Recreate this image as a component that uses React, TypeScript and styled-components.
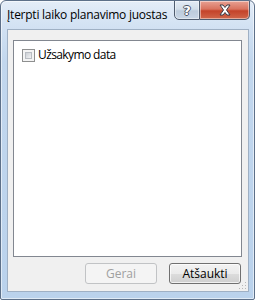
import React from "react";
import styled, { createGlobalStyle } from "styled-components";

const Global = createGlobalStyle`
  html, body { margin: 0; padding: 0; background: #ffffff; }
  body { font-family: "Open Sans", "Noto Sans", "Liberation Sans", sans-serif; }
  * { box-sizing: border-box; }
`;

const Window = styled.div`
  width: 255px;
  height: 300px;
  display: flex;
  flex-direction: column;
  border: 1px solid #5d7089;
  border-radius: 6px 6px 2px 2px;
  background: linear-gradient(180deg, #e4edf8 0px, #d3e2f3 24px, #c2d7ee 60px, #bad2ec 100%);
  box-shadow: inset 0 0 0 1px rgba(255, 255, 255, 0.55);
  overflow: hidden;
`;

const TitleBar = styled.div`
  height: 28px;
  display: flex;
  align-items: flex-start;
  padding-left: 6px;
  flex-shrink: 0;
`;

const Title = styled.div`
  margin-top: 6px;
  font-size: 12px;
  line-height: 16px;
  color: #000000;
  letter-spacing: -0.25px;
  white-space: nowrap;
`;

const Caption = styled.div`
  margin-left: auto;
  margin-right: 4px;
  display: flex;
  margin-top: -1px;
`;

const CaptionButton = styled.div<{ $variant: "help" | "close" }>`
  width: ${(p) => (p.$variant === "help" ? "26px" : "50px")};
  height: 20px;
  display: flex;
  align-items: center;
  justify-content: center;
  border: 1px solid #4f5c6f;
  border-left-width: ${(p) => (p.$variant === "close" ? "0" : "1px")};
  border-radius: ${(p) => (p.$variant === "help" ? "0 0 0 5px" : "0 0 5px 0")};
  background: ${(p) =>
    p.$variant === "help"
      ? "linear-gradient(180deg, #e3ebf5 0%, #d3deea 45%, #bccbdc 55%, #c8d6e6 100%)"
      : "linear-gradient(180deg, #e8a193 0%, #d9735f 45%, #c4432a 55%, #d0664a 100%)"};
  box-shadow: inset 0 0 0 1px rgba(255, 255, 255, 0.45);
`;

const HelpGlyph = styled.span`
  font-family: "DejaVu Sans", sans-serif;
  font-weight: bold;
  font-size: 13px;
  line-height: 13px;
  color: #ffffff;
  text-shadow: 1px 0 0 #4c5566, -1px 0 0 #4c5566, 0 1px 0 #4c5566, 0 -1px 0 #4c5566;
`;

const Client = styled.div`
  position: relative;
  flex: 1;
  margin: 0 5px 7px 6px;
  border: 1px solid #9fb0c4;
  background: #f0f0f0;
  display: flex;
  flex-direction: column;
  padding: 10px 6px 7px 5px;
`;

const ListBox = styled.div`
  flex: 1;
  background: #ffffff;
  border: 1px solid #828790;
  padding: 6px 8px;
`;

const Row = styled.label`
  display: flex;
  align-items: center;
  gap: 3px;
  font-size: 12px;
  line-height: 16px;
  letter-spacing: -0.6px;
  color: #000000;
`;

const Box = styled.span`
  width: 13px;
  height: 13px;
  border: 1px solid #8e8f8f;
  background: #f4f4f4;
  padding: 2px;
  display: inline-block;
  flex-shrink: 0;
  &::after {
    content: "";
    display: block;
    width: 100%;
    height: 100%;
    background: linear-gradient(135deg, #cbcfd5 0%, #e2e4e7 60%, #f3f3f4 100%);
    border: 1px solid #b9bdc3;
    box-sizing: border-box;
  }
`;

const Footer = styled.div`
  display: flex;
  justify-content: flex-end;
  gap: 12px;
  margin-top: 6px;
  padding-right: 1px;
`;

const Button = styled.button<{ $disabled?: boolean }>`
  width: 72px;
  height: 21px;
  font-family: inherit;
  font-size: 12px;
  line-height: 14px;
  padding: 0;
  border-radius: 3px;
  border: 1px solid ${(p) => (p.$disabled ? "#c1c3c5" : "#707070")};
  color: ${(p) => (p.$disabled ? "#a0a0a0" : "#000000")};
  background: ${(p) =>
    p.$disabled
      ? "#f4f4f4"
      : "linear-gradient(180deg, #f2f2f2 0%, #ebebeb 50%, #dddddd 51%, #cfcfcf 100%)"};
  box-shadow: inset 0 0 0 1px ${(p) => (p.$disabled ? "#f4f4f4" : "rgba(255,255,255,0.7)")};
`;

const Grip = styled.svg`
  position: absolute;
  right: 1px;
  bottom: 1px;
`;

export default function App() {
  return (
    <>
      <Global />
      <Window>
        <TitleBar>
          <Title>Įterpti laiko planavimo juostas</Title>
          <Caption>
            <CaptionButton $variant="help">
              <HelpGlyph>?</HelpGlyph>
            </CaptionButton>
            <CaptionButton $variant="close">
              <svg width="14" height="12" viewBox="0 0 14 12">
                <path
                  d="M2 1 L5 1 L7 3.5 L9 1 L12 1 L8.5 6 L12 11 L9 11 L7 8.5 L5 11 L2 11 L5.5 6 Z"
                  fill="#ffffff"
                  stroke="#3b3b45"
                  strokeWidth="1"
                  strokeLinejoin="round"
                />
              </svg>
            </CaptionButton>
          </Caption>
        </TitleBar>
        <Client>
          <ListBox>
            <Row>
              <Box />
              Užsakymo data
            </Row>
          </ListBox>
          <Footer>
            <Button $disabled>Gerai</Button>
            <Button>Atšaukti</Button>
          </Footer>
          <Grip width="8" height="8" viewBox="0 0 8 8">
            <rect x="6" y="0" width="1" height="1" fill="#b8b8b8" />
            <rect x="3" y="3" width="1" height="1" fill="#b8b8b8" />
            <rect x="6" y="3" width="1" height="1" fill="#b8b8b8" />
            <rect x="0" y="6" width="1" height="1" fill="#b8b8b8" />
            <rect x="3" y="6" width="1" height="1" fill="#b8b8b8" />
            <rect x="6" y="6" width="1" height="1" fill="#b8b8b8" />
          </Grip>
        </Client>
      </Window>
    </>
  );
}
